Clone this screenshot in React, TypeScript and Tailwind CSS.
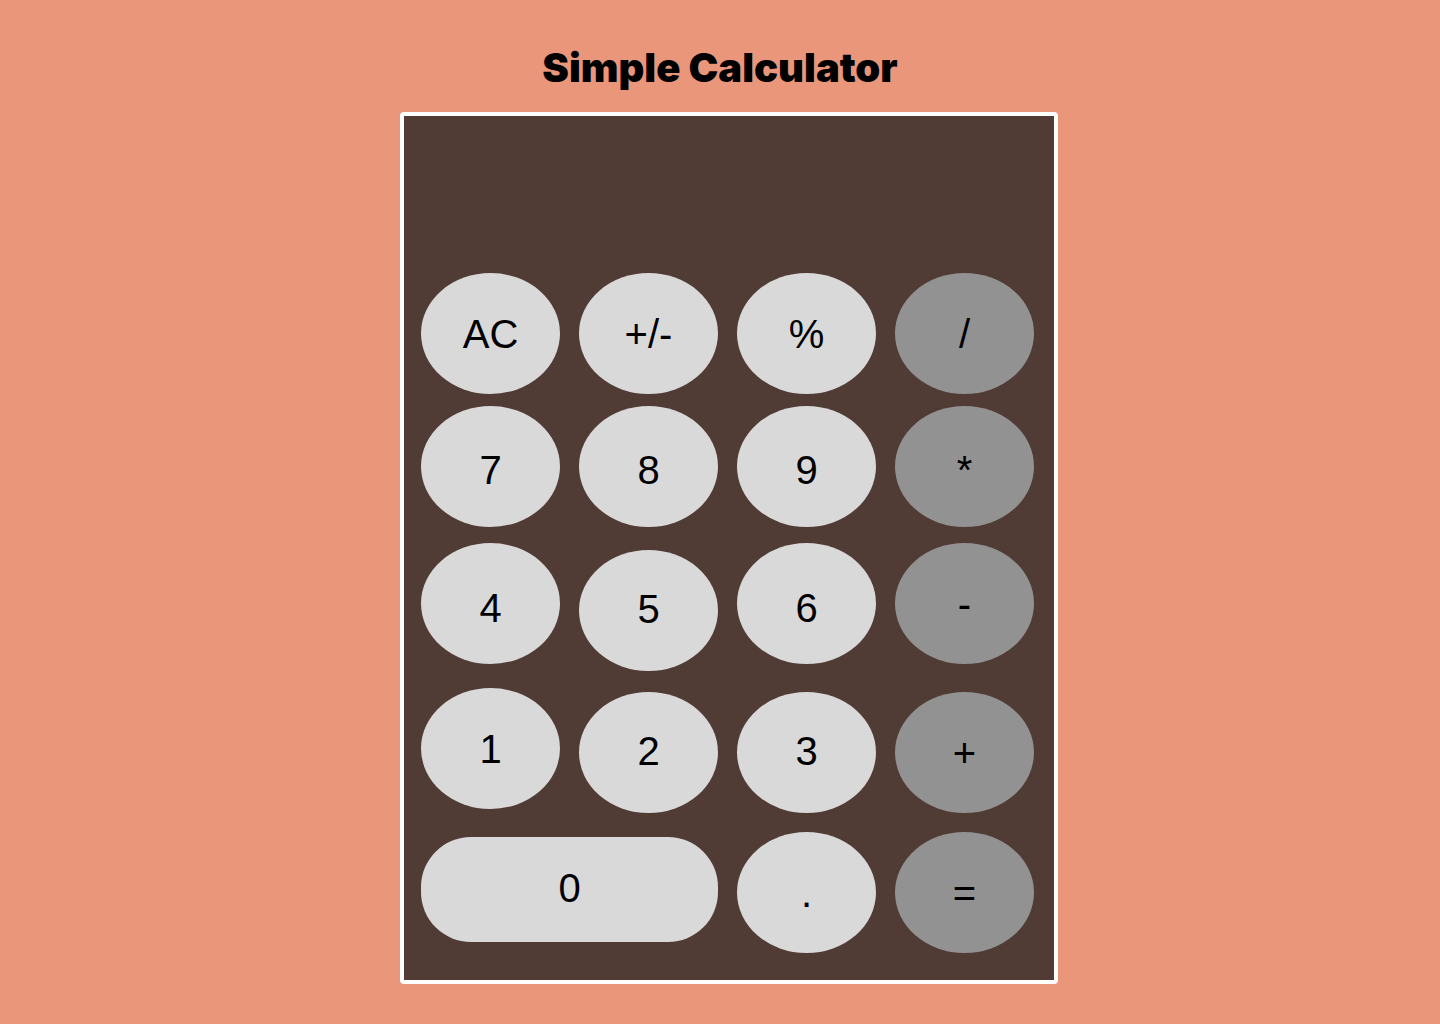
import { useState } from "react";

type KeyDef = { label: string; name: string; className?: string };
type RowDef = { className: string; keys: KeyDef[] };

const ROWS: RowDef[] = [
  {
    className: "items-start",
    keys: [
      { label: "AC", name: "All clear" },
      { label: "+/-", name: "Toggle sign" },
      { label: "%", name: "Percent" },
      { label: "/", name: "Divide" },
    ],
  },
  {
    className: "mt-3 items-start",
    keys: [
      { label: "7", name: "7", className: "pt-1.5" },
      { label: "8", name: "8", className: "pt-1.5" },
      { label: "9", name: "9", className: "pt-1.5" },
      { label: "*", name: "Multiply", className: "pt-1.5" },
    ],
  },
  {
    className: "mt-4 h-[128px] items-start",
    keys: [
      { label: "4", name: "4", className: "pt-2" },
      { label: "5", name: "5", className: "self-end pb-1" },
      { label: "6", name: "6", className: "pt-2" },
      { label: "-", name: "Subtract" },
    ],
  },
  {
    className: "mt-[17px] h-[125px] items-end",
    keys: [
      { label: "1", name: "1", className: "self-start" },
      { label: "2", name: "2", className: "pb-1" },
      { label: "3", name: "3", className: "pb-1" },
      { label: "+", name: "Add" },
    ],
  },
  {
    className: "mt-[19px] items-start",
    keys: [
      { label: "0", name: "0" },
      { label: ".", name: "Decimal point" },
      { label: "=", name: "Equals" },
    ],
  },
];

const OPERATORS = ["/", "*", "-", "+", "="];

function compute(a: number, b: number, op: string) {
  if (op === "+") return a + b;
  if (op === "-") return a - b;
  if (op === "*") return a * b;
  return a / b;
}

function Key({ def, onPress }: { def: KeyDef; onPress: (label: string) => void }) {
  const color = OPERATORS.includes(def.label) ? "bg-[#929292]" : "bg-[#d9d9d9]";
  const shape =
    def.label === "0" ? "col-span-2 mt-[5px] h-[105px] rounded-[50px] pb-1" : "h-[121px] rounded-[50%]";
  return (
    <button
      type="button"
      aria-label={def.name}
      onClick={() => onPress(def.label)}
      className={`flex w-full cursor-pointer items-center justify-center text-black active:brightness-90 ${color} ${shape} ${def.className ?? ""}`}
    >
      {def.label}
    </button>
  );
}

export default function App() {
  const [display, setDisplay] = useState("");
  const [stored, setStored] = useState<number | null>(null);
  const [operator, setOperator] = useState<string | null>(null);
  const [fresh, setFresh] = useState(true);

  function press(label: string) {
    if (label === "AC") {
      setDisplay("");
      setStored(null);
      setOperator(null);
      setFresh(true);
    } else if (label === "+/-") {
      if (display) setDisplay(String(-Number(display)));
    } else if (label === "%") {
      if (display) setDisplay(String(Number(display) / 100));
    } else if (OPERATORS.includes(label)) {
      if (!display) return;
      const current = Number(display);
      const result =
        stored !== null && operator && !fresh ? compute(stored, current, operator) : current;
      setDisplay(String(result));
      setStored(label === "=" ? null : result);
      setOperator(label === "=" ? null : label);
      setFresh(true);
    } else {
      const base = fresh ? "" : display;
      if (label === "." && base.includes(".")) return;
      setDisplay((base + label).slice(0, 14));
      setFresh(false);
    }
  }

  return (
    <main className="flex min-h-screen flex-col items-center bg-[#ea967a] px-4 pt-11 pb-10">
      <h1 className="font-['Inter',sans-serif] text-[40px] leading-[48px] font-black text-black">
        Simple Calculator
      </h1>
      <div className="flex w-full justify-center pt-5 md:pl-[18px]">
        <section
          aria-label="Calculator"
          className="w-full max-w-[658px] rounded border-4 border-white bg-[#503b35] pr-5 pb-[27px] pl-[17px] font-['Liberation_Sans_Narrow','Liberation_Sans',sans-serif] text-[40px] leading-[48px]"
        >
          <output
            aria-label="Result"
            className="flex h-[157px] items-center justify-end overflow-hidden px-4 text-6xl text-white"
          >
            {display}
          </output>
          {ROWS.map((row) => (
            <div
              key={row.keys[0].label}
              className={`grid grid-cols-4 gap-x-[19px] ${row.className}`}
            >
              {row.keys.map((def) => (
                <Key key={def.label} def={def} onPress={press} />
              ))}
            </div>
          ))}
        </section>
      </div>
    </main>
  );
}
